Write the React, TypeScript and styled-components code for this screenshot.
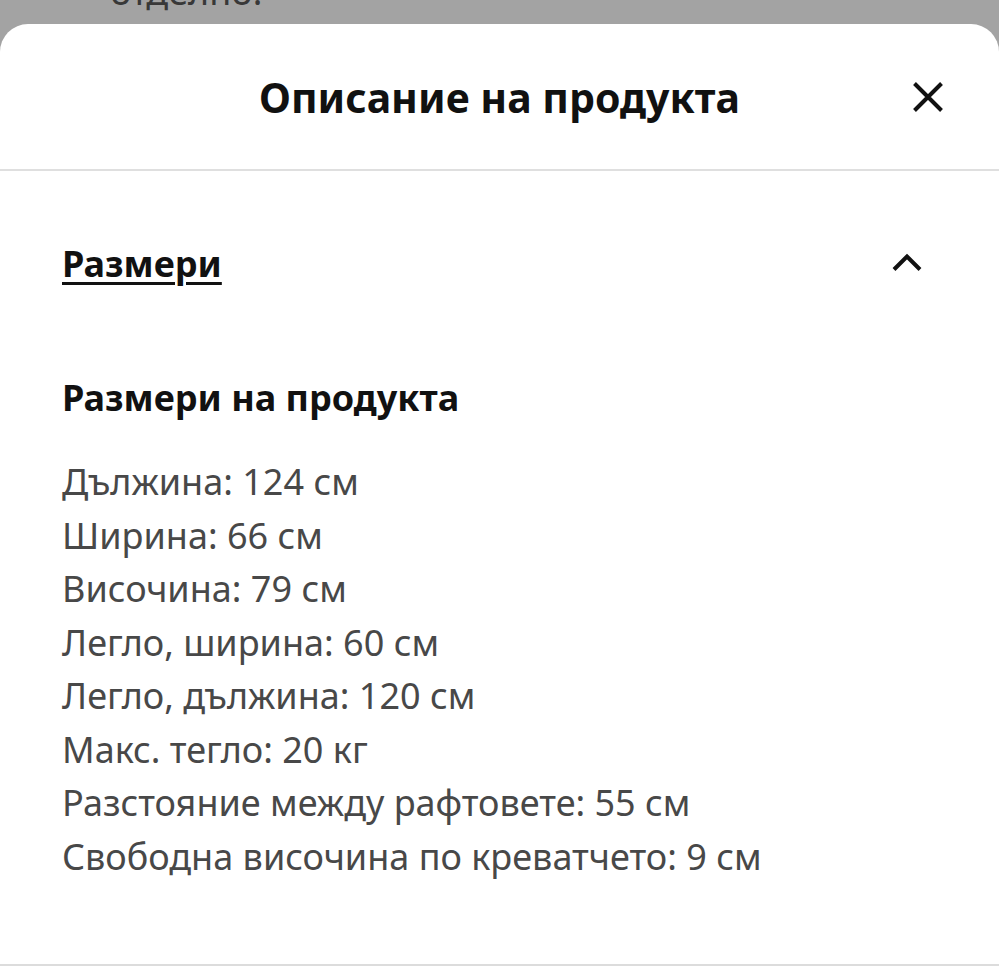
import * as React from "react";
import styled, { createGlobalStyle } from "styled-components";

const GlobalStyle = createGlobalStyle`
  html, body {
    margin: 0;
    padding: 0;
    background: #a3a3a3;
    font-family: "Noto Sans", "Open Sans", sans-serif;
    -webkit-font-smoothing: antialiased;
  }
`;

const Backdrop = styled.div`
  height: 24px;
  overflow: hidden;
`;

const BackdropText = styled.p`
  margin: 0;
  padding-left: 110px;
  margin-top: -35px;
  font-size: 36px;
  line-height: 53px;
  color: #383838;
`;

const Sheet = styled.section`
  background: #fff;
  border-radius: 28px 28px 0 0;
  min-height: 945px;
`;

const Header = styled.header`
  height: 145px;
  display: flex;
  align-items: center;
  justify-content: center;
  position: relative;
  border-bottom: 2px solid #dfdfdf;
`;

const Title = styled.h2`
  margin: 0;
  font-size: 41px;
  font-weight: 700;
  color: #111;
`;

const CloseButton = styled.button`
  position: absolute;
  right: 47px;
  top: 50%;
  transform: translateY(-50%);
  width: 48px;
  height: 48px;
  border: 0;
  background: none;
  padding: 0;
  display: flex;
  align-items: center;
  justify-content: center;
`;

const Body = styled.div`
  padding: 0 62px;
  border-bottom: 2px solid #dcdcdc;
`;

const AccordionRow = styled.div`
  display: flex;
  align-items: center;
  justify-content: space-between;
  height: 184px;
`;

const AccordionTitle = styled.span`
  font-size: 36px;
  font-weight: 700;
  color: #111;
  text-decoration: underline;
  text-decoration-thickness: 3px;
  text-underline-offset: 5px;
`;

const ChevronButton = styled.button`
  border: 0;
  background: none;
  padding: 0;
  margin-right: 15px;
  width: 30px;
  height: 30px;
  display: flex;
  align-items: center;
  justify-content: center;
`;

const SubTitle = styled.h3`
  margin: 15px 0 29px;
  font-size: 36px;
  font-weight: 700;
  line-height: 56px;
  color: #111;
`;

const SpecList = styled.ul`
  list-style: none;
  margin: 0;
  padding: 0 0 81px;
`;

const SpecItem = styled.li`
  font-size: 36px;
  line-height: 53.5px;
  color: #484848;
`;

const specs = [
  "Дължина: 124 см",
  "Ширина: 66 см",
  "Височина: 79 см",
  "Легло, ширина: 60 см",
  "Легло, дължина: 120 см",
  "Макс. тегло: 20 кг",
  "Разстояние между рафтовете: 55 см",
  "Свободна височина по креватчето: 9 см",
];

function App() {
  return (
    <>
      <GlobalStyle />
      <Backdrop>
        <BackdropText>отделно.</BackdropText>
      </Backdrop>
      <Sheet>
        <Header>
          <Title>Описание на продукта</Title>
          <CloseButton aria-label="Затвори">
            <svg width="32" height="32" viewBox="0 0 32 32">
              <path d="M2.5 2.5 L29.5 29.5 M29.5 2.5 L2.5 29.5" stroke="#111" strokeWidth="4" fill="none" />
            </svg>
          </CloseButton>
        </Header>
        <Body>
          <AccordionRow>
            <AccordionTitle>Размери</AccordionTitle>
            <ChevronButton aria-label="Свий">
              <svg width="30" height="20" viewBox="0 0 30 20">
                <path d="M2 16.5 L15 3.5 L28 16.5" stroke="#111" strokeWidth="4" fill="none" />
              </svg>
            </ChevronButton>
          </AccordionRow>
          <SubTitle>Размери на продукта</SubTitle>
          <SpecList>
            {specs.map((s) => (
              <SpecItem key={s}>{s}</SpecItem>
            ))}
          </SpecList>
        </Body>
      </Sheet>
    </>
  );
}

export default App;
